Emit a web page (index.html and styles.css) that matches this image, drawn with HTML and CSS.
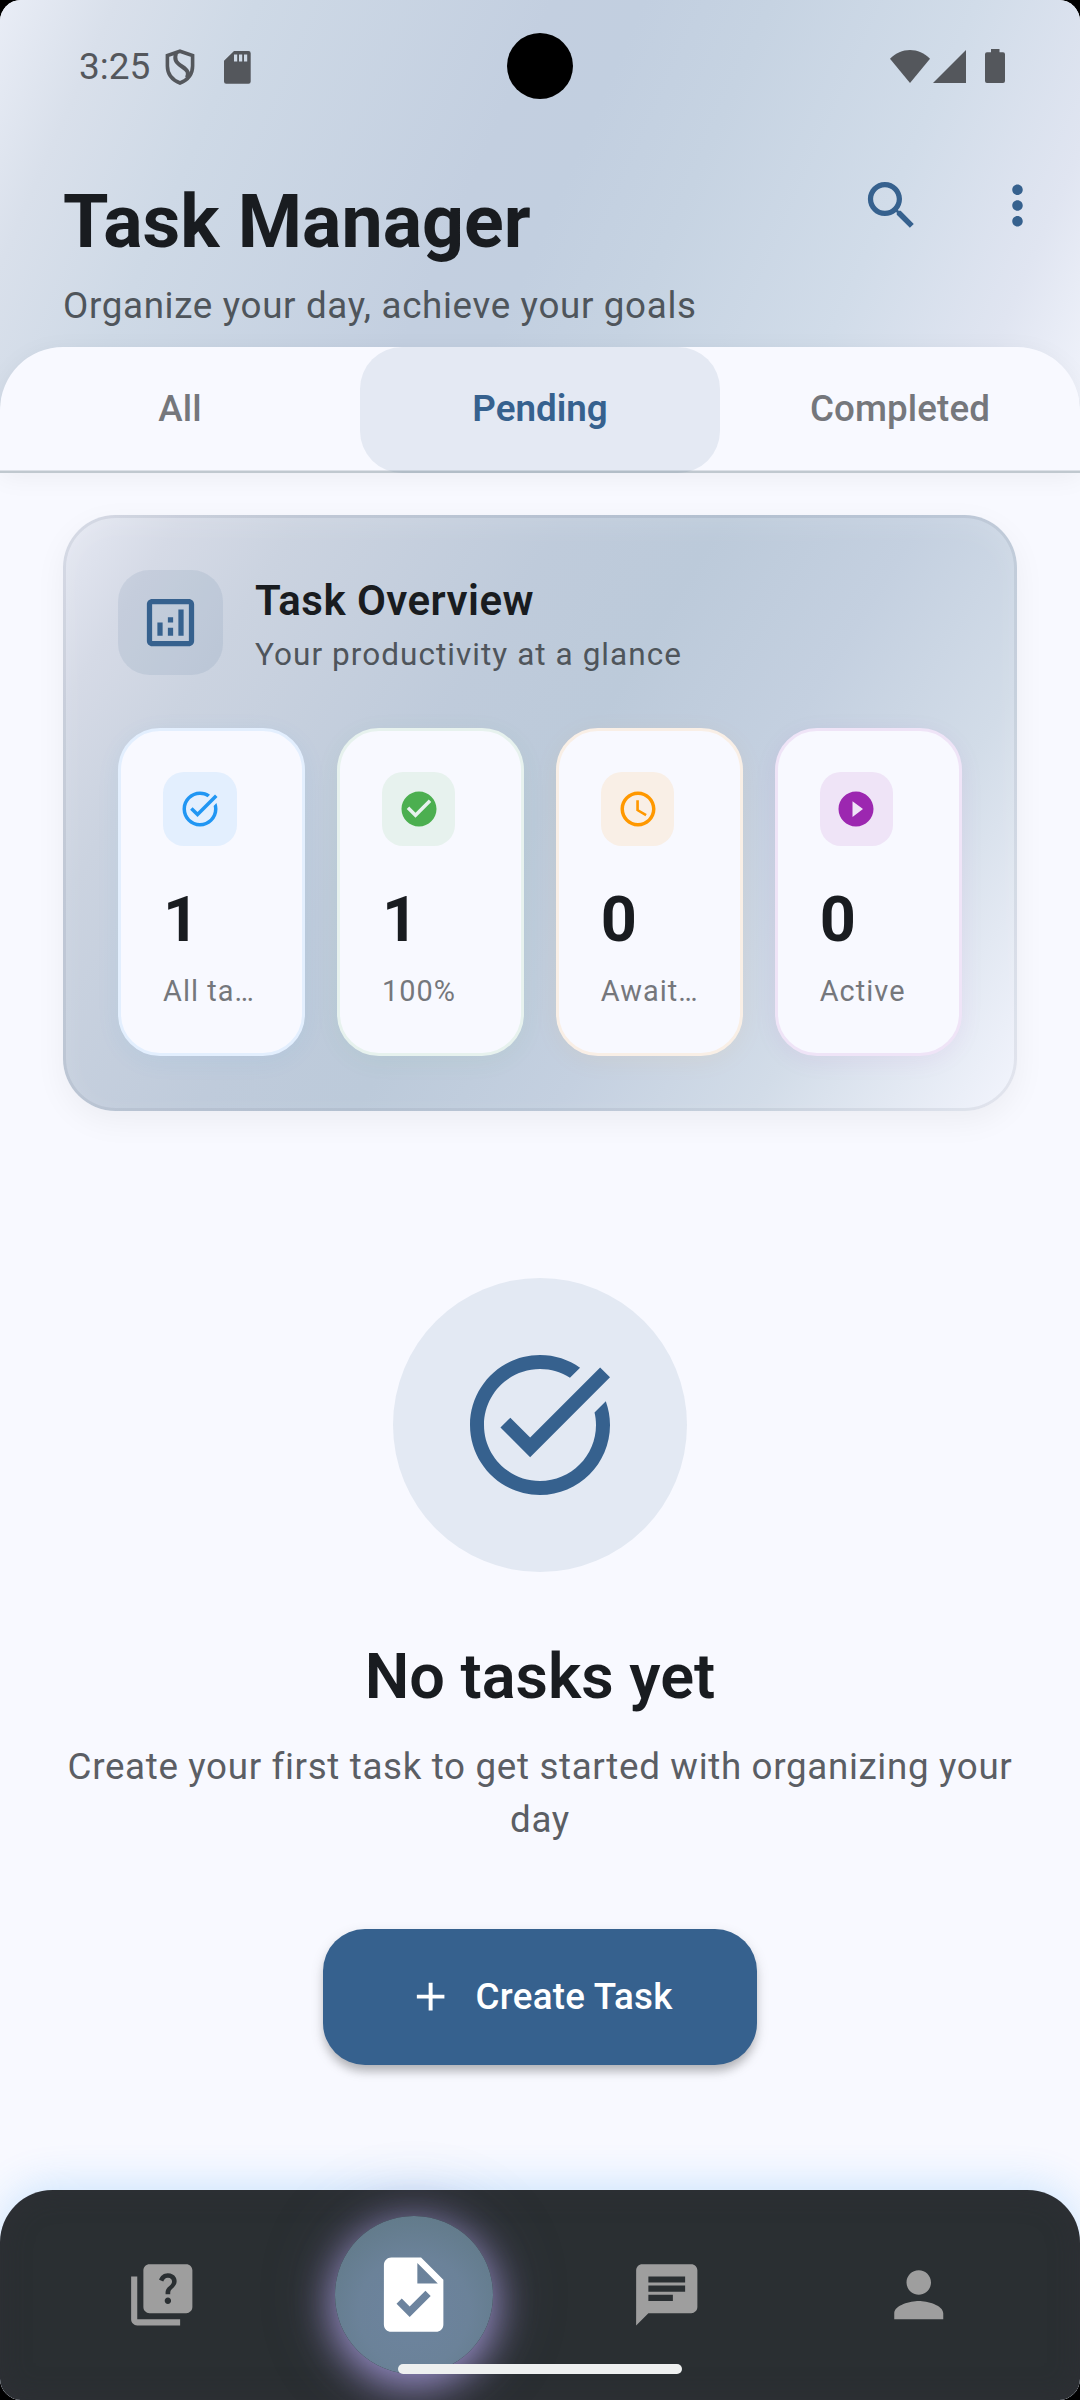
FILE: index.html
```html
<!DOCTYPE html>
<html lang="en">
<head>
<meta charset="utf-8">
<title>Task Manager</title>
<link rel="stylesheet" href="styles.css">
</head>
<body>
<div class="screen">
  <header class="header">
    <div class="status">
      <div class="status-left">
        <span class="clock">3:25</span>
        <svg class="ic-shield" viewBox="0 0 30 36"><path d="M15 2.200 27.600 6.600V17c0 8-5 14-12.600 17C7.400 31 2.400 25 2.400 17V6.600Z" fill="none" stroke="#54575c" stroke-width="3.600"/><path d="M11 4c-2 7 0 9.500 6 13.500 6 4 7 6.500 5 11" fill="none" stroke="#54575c" stroke-width="4"/></svg>
        <svg class="ic-sd" viewBox="0 0 27 33"><path fill="#54575c" fill-rule="evenodd" d="M10 0H24.500A2.200 2.200 0 0 1 26.700 2.200V30.500A2.200 2.200 0 0 1 24.500 32.700H2.200A2.200 2.200 0 0 1 0 30.500V9.800ZM10 3.500V10.500H13.200V3.500ZM15 3.500V10.500H18.200V3.500ZM20 3.500V10.500H23.200V3.500Z"/></svg>
      </div>
      <div class="camera"></div>
      <div class="status-right">
        <svg class="ic-wifi" viewBox="0 0 40 33"><path fill="#54575c" d="M20 33 0 8.800C11-2.900 29-2.900 40 8.800Z"/></svg>
        <svg class="ic-signal" viewBox="0 0 33 33"><path fill="#54575c" d="M33 0V33H0Z"/></svg>
        <svg class="ic-battery" viewBox="0 0 20 34"><path fill="#54575c" d="M6 0h8.500v3.200H18A2 2 0 0 1 20 5.200V32a2 2 0 0 1-2 2H2a2 2 0 0 1-2-2V5.200a2 2 0 0 1 2-2H6Z"/></svg>
      </div>
    </div>
    <div class="appbar">
      <div class="titles">
        <h1>Task Manager</h1>
        <p>Organize your day, achieve your goals</p>
      </div>
      <div class="actions">
        <svg class="ic24" viewBox="0 0 24 24"><path d="M15.500 14h-.79l-.28-.27C15.410 12.590 16 11.110 16 9.500 16 5.910 13.090 3 9.500 3S3 5.910 3 9.500 5.910 16 9.500 16c1.610 0 3.090-.59 4.230-1.570l.27.28v.79l5 4.990L20.490 19l-4.990-5zm-6 0C7.010 14 5 11.990 5 9.500S7.010 5 9.500 5 14 7.010 14 9.500 11.990 14 9.500 14z"/></svg>
        <svg class="ic24" viewBox="0 0 24 24"><path d="M12 8c1.100 0 2-.9 2-2s-.9-2-2-2-2 .9-2 2 .9 2 2 2zm0 2c-1.100 0-2 .9-2 2s.9 2 2 2 2-.9 2-2-.9-2-2-2zm0 6c-1.100 0-2 .9-2 2s.9 2 2 2 2-.9 2-2-.9-2-2-2z"/></svg>
      </div>
    </div>
    <nav class="tabs">
      <span class="tab">All</span>
      <span class="tab active">Pending</span>
      <span class="tab">Completed</span>
    </nav>
  </header>

  <main class="content">
    <section class="overview">
      <div class="overview-head">
        <div class="overview-icon"><svg class="ic24" viewBox="0 0 24 24"><path d="M19 3H5c-1.100 0-2 .9-2 2v14c0 1.100.9 2 2 2h14c1.100 0 2-.9 2-2V5c0-1.100-.9-2-2-2zm0 16H5V5h14v14zM7 12h2v5H7zM15 7h2v10h-2zM11 14h2v3h-2zM11 10h2v2h-2z"/></svg></div>
        <div class="overview-text">
          <h2>Task Overview</h2>
          <p>Your productivity at a glance</p>
        </div>
      </div>
      <div class="stats">
        <div class="stat blue">
          <div class="stat-icon"><svg viewBox="0 0 24 24"><path d="M22 5.180 10.590 16.600l-4.240-4.240 1.410-1.410 2.830 2.830 10-10L22 5.180zm-2.210 5.040c.13.570.21 1.170.21 1.780 0 4.420-3.580 8-8 8s-8-3.580-8-8 3.580-8 8-8c1.580 0 3.040.46 4.280 1.250l1.440-1.440C16.100 2.670 14.130 2 12 2 6.480 2 2 6.480 2 12s4.480 10 10 10 10-4.480 10-10c0-1.190-.22-2.330-.6-3.390l-1.610 1.610z"/></svg></div>
          <strong>1</strong><span>All ta…</span>
        </div>
        <div class="stat green">
          <div class="stat-icon"><svg viewBox="0 0 24 24"><path d="M12 2C6.480 2 2 6.480 2 12s4.480 10 10 10 10-4.480 10-10S17.520 2 12 2zm-2 15-5-5 1.410-1.410L10 14.170l7.590-7.590L19 8l-9 9z"/></svg></div>
          <strong>1</strong><span>100%</span>
        </div>
        <div class="stat orange">
          <div class="stat-icon"><svg viewBox="0 0 24 24"><path d="M11.990 2C6.470 2 2 6.480 2 12s4.470 10 9.990 10C17.520 22 22 17.520 22 12S17.520 2 11.990 2zM12 20c-4.420 0-8-3.580-8-8s3.580-8 8-8 8 3.580 8 8-3.580 8-8 8zm.5-13H11v6l5.250 3.150.75-1.230-4.500-2.670z"/></svg></div>
          <strong>0</strong><span>Await…</span>
        </div>
        <div class="stat purple">
          <div class="stat-icon"><svg viewBox="0 0 24 24"><path d="M12 2C6.480 2 2 6.480 2 12s4.480 10 10 10 10-4.480 10-10S17.520 2 12 2zm-2 14.500v-9l6 4.500-6 4.500z"/></svg></div>
          <strong>0</strong><span>Active</span>
        </div>
      </div>
    </section>

    <section class="empty">
      <div class="empty-icon"><svg viewBox="0 0 24 24"><path d="M22 5.180 10.590 16.600l-4.240-4.240 1.410-1.410 2.830 2.830 10-10L22 5.180zm-2.210 5.040c.13.570.21 1.170.21 1.780 0 4.420-3.580 8-8 8s-8-3.580-8-8 3.580-8 8-8c1.580 0 3.040.46 4.280 1.250l1.440-1.440C16.100 2.670 14.130 2 12 2 6.480 2 2 6.480 2 12s4.480 10 10 10 10-4.480 10-10c0-1.190-.22-2.330-.6-3.390l-1.610 1.610z"/></svg></div>
      <h3>No tasks yet</h3>
      <p>Create your first task to get started with organizing your day</p>
      <button class="create"><svg viewBox="0 0 24 24"><path d="M19 13h-6v6h-2v-6H5v-2h6V5h2v6h6v2z"/></svg>Create Task</button>
    </section>
  </main>

  <nav class="bottom">
    <span class="item"><svg viewBox="0 0 24 24"><path d="M4 6H2v14c0 1.100.9 2 2 2h14v-2H4V6z"/><path d="M20 2H8c-1.100 0-2 .9-2 2v12c0 1.100.9 2 2 2h12c1.100 0 2-.9 2-2V4c0-1.100-.9-2-2-2zm-5.990 13c-.59 0-1.050-.47-1.050-1.050 0-.59.47-1.040 1.050-1.040.59 0 1.040.45 1.040 1.040-.01.580-.45 1.050-1.040 1.050zm2.500-6.170c-.63.930-1.230 1.210-1.560 1.810-.13.240-.18.400-.18 1.180h-1.520c0-.41-.06-1.080.26-1.650.41-.73 1.180-1.160 1.630-1.800.48-.68.210-1.940-1.140-1.940-.88 0-1.320.67-1.500 1.230l-1.370-.57C11.510 5.960 12.520 5 13.990 5c1.230 0 2.080.56 2.510 1.260.37.600.58 1.730.01 2.570z"/></svg></span>
    <span class="item"><span class="bubble"><svg viewBox="0 0 24 24"><path d="M14 2H6c-1.100 0-1.990.9-1.990 2L4 20c0 1.100.89 2 1.990 2H18c1.100 0 2-.9 2-2V8l-6-6zm-3.060 16L7.400 14.460l1.410-1.410 2.120 2.120 4.240-4.240 1.410 1.410L10.940 18zM13 9V3.500L18.500 9H13z"/></svg></span></span>
    <span class="item"><svg viewBox="0 0 24 24"><path d="M20 2H4c-1.100 0-1.990.9-1.990 2L2 22l4-4h14c1.100 0 2-.9 2-2V4c0-1.100-.9-2-2-2zM6 9h12v2H6V9zm8 5H6v-2h8v2zm4-6H6V6h12v2z"/></svg></span>
    <span class="item"><svg viewBox="0 0 24 24"><path d="M12 12c2.210 0 4-1.790 4-4s-1.790-4-4-4-4 1.790-4 4 1.790 4 4 4zm0 2c-2.670 0-8 1.340-8 4v2h16v-2c0-2.660-5.330-4-8-4z"/></svg></span>
    <span class="home"></span>
  </nav>
</div>
</body>
</html>
```
FILE: styles.css
```css
* { box-sizing: border-box; }
html { background: #000; }
body { margin: 0; background: #000; font-family: Roboto, sans-serif; color: #191c20; }
h1, h2, h3, p { margin: 0; }
svg { display: block; flex: none; fill: currentColor; }

.screen {
  width: 1080px; height: 2400px; overflow: hidden;
  display: flex; flex-direction: column;
  background: #f8f9ff; border-radius: 21px;
}

/* header */
.header {
  height: 473px; flex: none; display: flex; flex-direction: column;
  background: linear-gradient(113.65deg, #e9edf6 0%, #d9e0eb 9%, #ced9e6 20%, #c3cfe0 43%, #c2cfe0 50%, #c6d3e2 60%, #d1dce9 76%, #e0e5f1 89%, #f4f6fd 100%);
  position: relative; z-index: 1;
}
.status { height: 132px; display: flex; justify-content: space-between; align-items: center; padding: 0 75px 0 79px; color: #54575c; }
.status-left, .status-right { display: flex; align-items: center; }
.status-left { width: 398px; }
.status-right { width: 402px; justify-content: flex-end; }
.clock { font-size: 37px; line-height: 44px; padding-top: 1px; }
.ic-shield { width: 30px; height: 36px; margin-left: 15px; margin-top: 2px; }
.ic-sd { width: 27px; height: 33px; margin-left: 29px; margin-top: 2px; }
.camera { width: 66px; height: 66px; flex: none; margin-left: -5px; margin-right: -5px; border-radius: 50%; background: #000; }
.ic-wifi { width: 40px; height: 33px; }
.ic-signal { width: 33px; height: 33px; margin-left: 3px; }
.ic-battery { width: 20px; height: 34px; margin-left: 19px; }
.appbar { height: 215px; display: flex; justify-content: space-between; padding: 42px 31px 0 63px; }
h1 { font-size: 73.5px; line-height: 96px; font-weight: 700; letter-spacing: 0; }
.titles p { font-size: 36.75px; line-height: 53px; letter-spacing: .66px; color: #4f555b; margin-top: 9px; }
.actions { display: flex; gap: 63px; color: #36618e; }
.ic24 { width: 63px; height: 63px; }
.tabs {
  height: 126px; display: flex; background: #f8f9ff;
  border-radius: 63px 63px 0 0; box-shadow: inset 0 -2.600px #c0c8cf, 0 5px 26px rgba(0,0,0,.05);
}
.tab { flex: 1; height: 126px; display: flex; align-items: center; justify-content: center; padding-bottom: 3px; font-size: 36.75px; font-weight: 500; letter-spacing: .1px; color: #75777c; }
.tab.active { background: rgba(54,97,142,.1); color: #36618e; border-radius: 42px; font-weight: 600; letter-spacing: 0; }

.content { flex: 1; padding: 42px 63px 0; }

/* overview card */
.overview {
  height: 596px; padding: 52px; border: 3px solid rgba(120,135,150,.13); border-radius: 52.5px;
  background: linear-gradient(122deg, #e6e9f3 0%, #d5dae6 9%, #cbd3e0 18%, #bfcbdb 38%, #bccada 50%, #c4d0e0 65%, #d2dce8 80%, #f3f5fd 100%) border-box;
  box-shadow: 0 10px 32px rgba(0,0,0,.05), inset 0 8px 28px rgba(255,255,255,.12);
}
.overview-head { display: flex; align-items: center; gap: 32px; height: 105px; }
.overview-icon { width: 105px; height: 105px; display: grid; place-items: center; border-radius: 31.5px; background: rgba(54,97,142,.1); color: #36618e; }
.overview-text { padding-top: 3px; }
h2 { font-size: 42px; line-height: 56px; font-weight: 600; letter-spacing: .45px; }
.overview-head p { font-size: 31.5px; line-height: 42px; letter-spacing: 1.05px; color: #4f555b; margin-top: 5px; }
.stats { display: grid; grid-template-columns: repeat(4, minmax(0, 1fr)); gap: 31.5px; margin-top: 53px; }
.stat {
  height: 328px; padding: 41px 42px; border: 3px solid color-mix(in srgb, var(--c) 10%, #f8f9ff); border-radius: 42px;
  background: #f8f9ff; display: flex; flex-direction: column;
  box-shadow: 0 5px 26px color-mix(in srgb, var(--c) 6%, transparent);
}
.blue { --c: #2196f3; } .green { --c: #4caf50; } .orange { --c: #ff9800; } .purple { --c: #9c27b0; }
.stat-icon { width: 73.5px; height: 73.5px; flex: none; display: grid; place-items: center; border-radius: 21px; background: color-mix(in srgb, var(--c) 10%, #f8f9ff); color: var(--c); }
.stat-icon svg { width: 42px; height: 42px; }
.stat strong { font-size: 63px; line-height: 84px; font-weight: 700; margin-top: 32px; }
.stat span { font-size: 28.9px; line-height: 42px; letter-spacing: 1.05px; color: #75777c; margin-top: 8px; white-space: nowrap; }

/* empty state */
.empty { display: flex; flex-direction: column; align-items: center; padding-top: 167px; text-align: center; }
.empty-icon { width: 294px; height: 294px; border-radius: 50%; background: #e3e9f3; display: grid; place-items: center; color: #36618e; }
.empty-icon svg { width: 168px; height: 168px; }
h3 { font-size: 63px; line-height: 84px; font-weight: 600; margin-top: 63px; }
.empty p { font-size: 36.75px; line-height: 52.5px; letter-spacing: .66px; color: #5b5e64; margin-top: 22px; }
.create {
  width: 434px; height: 136px; margin-top: 83px; border: 0; border-radius: 42px; background: #36618e; color: #fff;
  display: flex; align-items: center; justify-content: center; gap: 21px;
  font: 500 36.75px/52px Roboto, sans-serif; letter-spacing: .26px;
  box-shadow: 0 8px 10px -2px rgba(0,0,0,.2), 0 5px 14px rgba(0,0,0,.13);
}
.create svg { width: 47.25px; height: 47.25px; }

/* bottom navigation */
.bottom {
  height: 210px; flex: none; position: relative; display: flex; padding: 0 35px; color: #9e9e9e;
  background: #2a2f32; border-radius: 52.5px 52.5px 21px 21px;
  box-shadow: 0 -5px 42px rgba(33,150,243,.2), inset 0 0 30px rgba(55,50,60,.35);
}
.item { flex: 1; display: grid; place-items: center; }
.item svg { width: 73.5px; height: 73.5px; }
.bubble {
  width: 157.5px; height: 157.5px; border-radius: 50%; display: grid; place-items: center; color: #fff;
  background: radial-gradient(circle at 50% 60%, #6d849f 0%, #6b8299 45%, #607987 85%);
  box-shadow: 0 10px 40px 3px rgba(170,158,225,.85), 0 0 70px 6px rgba(100,95,140,.25);
}
.item .bubble svg { width: 89.25px; height: 89.25px; }
.home { position: absolute; left: 398px; top: 174px; width: 284px; height: 10px; border-radius: 5px; background: #eef0f0; }
```
